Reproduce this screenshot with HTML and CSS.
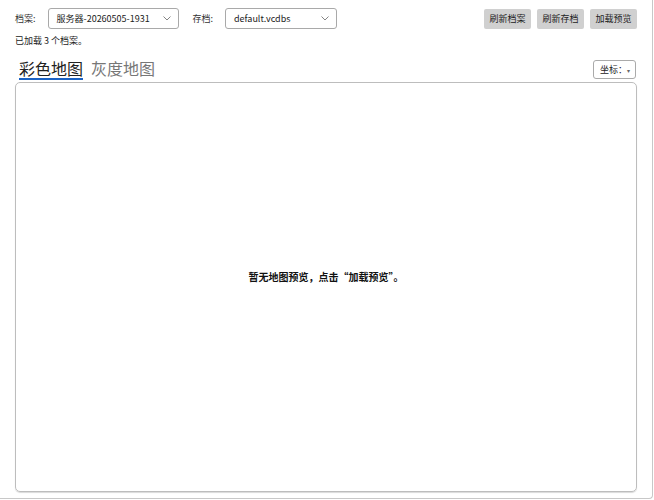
FILE: index.html
```html
<!DOCTYPE html>
<html lang="zh-CN">

<head>
  <meta charset="UTF-8">
  <title>地图预览</title>
  <link rel="stylesheet" href="styles.css">
</head>

<body>
  <div class="window">
    <section class="toolbar">
      <span class="field-label">档案:</span>
      <div class="select select-profile">
        <span>服务器-20260505-1931</span>
        <svg class="chevron" viewBox="0 0 8 5"><path d="M0.5 0.5 L4 4 L7.5 0.5" fill="none" stroke="#666" stroke-width="0.8" /></svg>
      </div>
      <span class="field-label">存档:</span>
      <div class="select select-save">
        <span>default.vcdbs</span>
        <svg class="chevron" viewBox="0 0 8 5"><path d="M0.5 0.5 L4 4 L7.5 0.5" fill="none" stroke="#666" stroke-width="0.8" /></svg>
      </div>
      <div class="actions">
        <button class="btn">刷新档案</button>
        <button class="btn">刷新存档</button>
        <button class="btn">加载预览</button>
      </div>
    </section>
    <p class="status">已加载 3 个档案。</p>
    <section class="tabs-row">
      <nav class="tabs">
        <span class="tab active">彩色地图</span>
        <span class="tab">灰度地图</span>
      </nav>
      <div class="coord-select">坐标：<span class="caret">▾</span></div>
    </section>
    <section class="map">
      <p class="map-empty">暂无地图预览，点击“加载预览”。</p>
    </section>
  </div>
</body>

</html>
```

FILE: styles.css
```css
html, body {
  margin: 0;
  padding: 0;
  background: #fff;
}
body {
  font-family: "Noto Sans CJK SC", "Noto Sans", sans-serif;
  font-size: 9px;
  color: #222;
}

.window {
  width: 653px;
  height: 499px;
  box-sizing: border-box;
  border-right: 1px solid #c8c8c8;
  border-bottom: 1px solid #c8c8c8;
  border-bottom-right-radius: 4px;
  padding: 8px 15px 0 15px;
  display: flex;
  flex-direction: column;
}

.toolbar {
  display: flex;
  align-items: center;
  height: 21px;
}
.field-label {
  color: #333;
  margin-right: 12px;
}
.select {
  box-sizing: border-box;
  height: 21px;
  border: 1px solid #a9a9a9;
  border-radius: 3px;
  display: flex;
  align-items: center;
  justify-content: space-between;
  padding: 0 7px 0 8px;
  color: #222;
  margin-right: 14px;
}
.select-profile {
  width: 131px;
}
.select-save {
  width: 112px;
}
.chevron {
  width: 8px;
  height: 5px;
}
.actions {
  margin-left: auto;
  display: flex;
  gap: 6px;
}
.btn {
  font-family: inherit;
  font-size: 9px;
  color: #222;
  background: #d0d0d0;
  border: none;
  border-radius: 2px;
  height: 20px;
  width: 47px;
  padding: 0;
}

.status {
  margin: 5px 0 0 0;
  line-height: 14px;
  color: #222;
}

.tabs-row {
  display: flex;
  justify-content: space-between;
  align-items: flex-end;
  margin-top: 10px;
}
.tabs {
  display: flex;
  gap: 8px;
  padding-left: 4px;
}
.tab {
  font-size: 16px;
  line-height: 20px;
  color: #777;
  padding-bottom: 1px;
}
.tab.active {
  color: #222;
  border-bottom: 2px solid #1a62c4;
  padding-bottom: 0;
}
.coord-select {
  box-sizing: border-box;
  height: 19px;
  width: 43px;
  border: 1px solid #aaa;
  border-radius: 3px;
  padding: 0 4px 0 6px;
  line-height: 17px;
  margin-bottom: 1px;
  margin-right: 1px;
}
.caret {
  font-size: 6px;
  color: #666;
}

.map {
  flex: 1;
  margin: 2px 0 6px 0;
  border: 1px solid #bdbdbd;
  border-radius: 5px;
  box-shadow: 0 1px 1px rgba(0, 0, 0, 0.15);
  display: flex;
  align-items: center;
  justify-content: center;
}
.map-empty {
  margin: 0 0 22px 0;
  font-size: 10px;
  font-weight: bold;
  color: #111;
}
```
